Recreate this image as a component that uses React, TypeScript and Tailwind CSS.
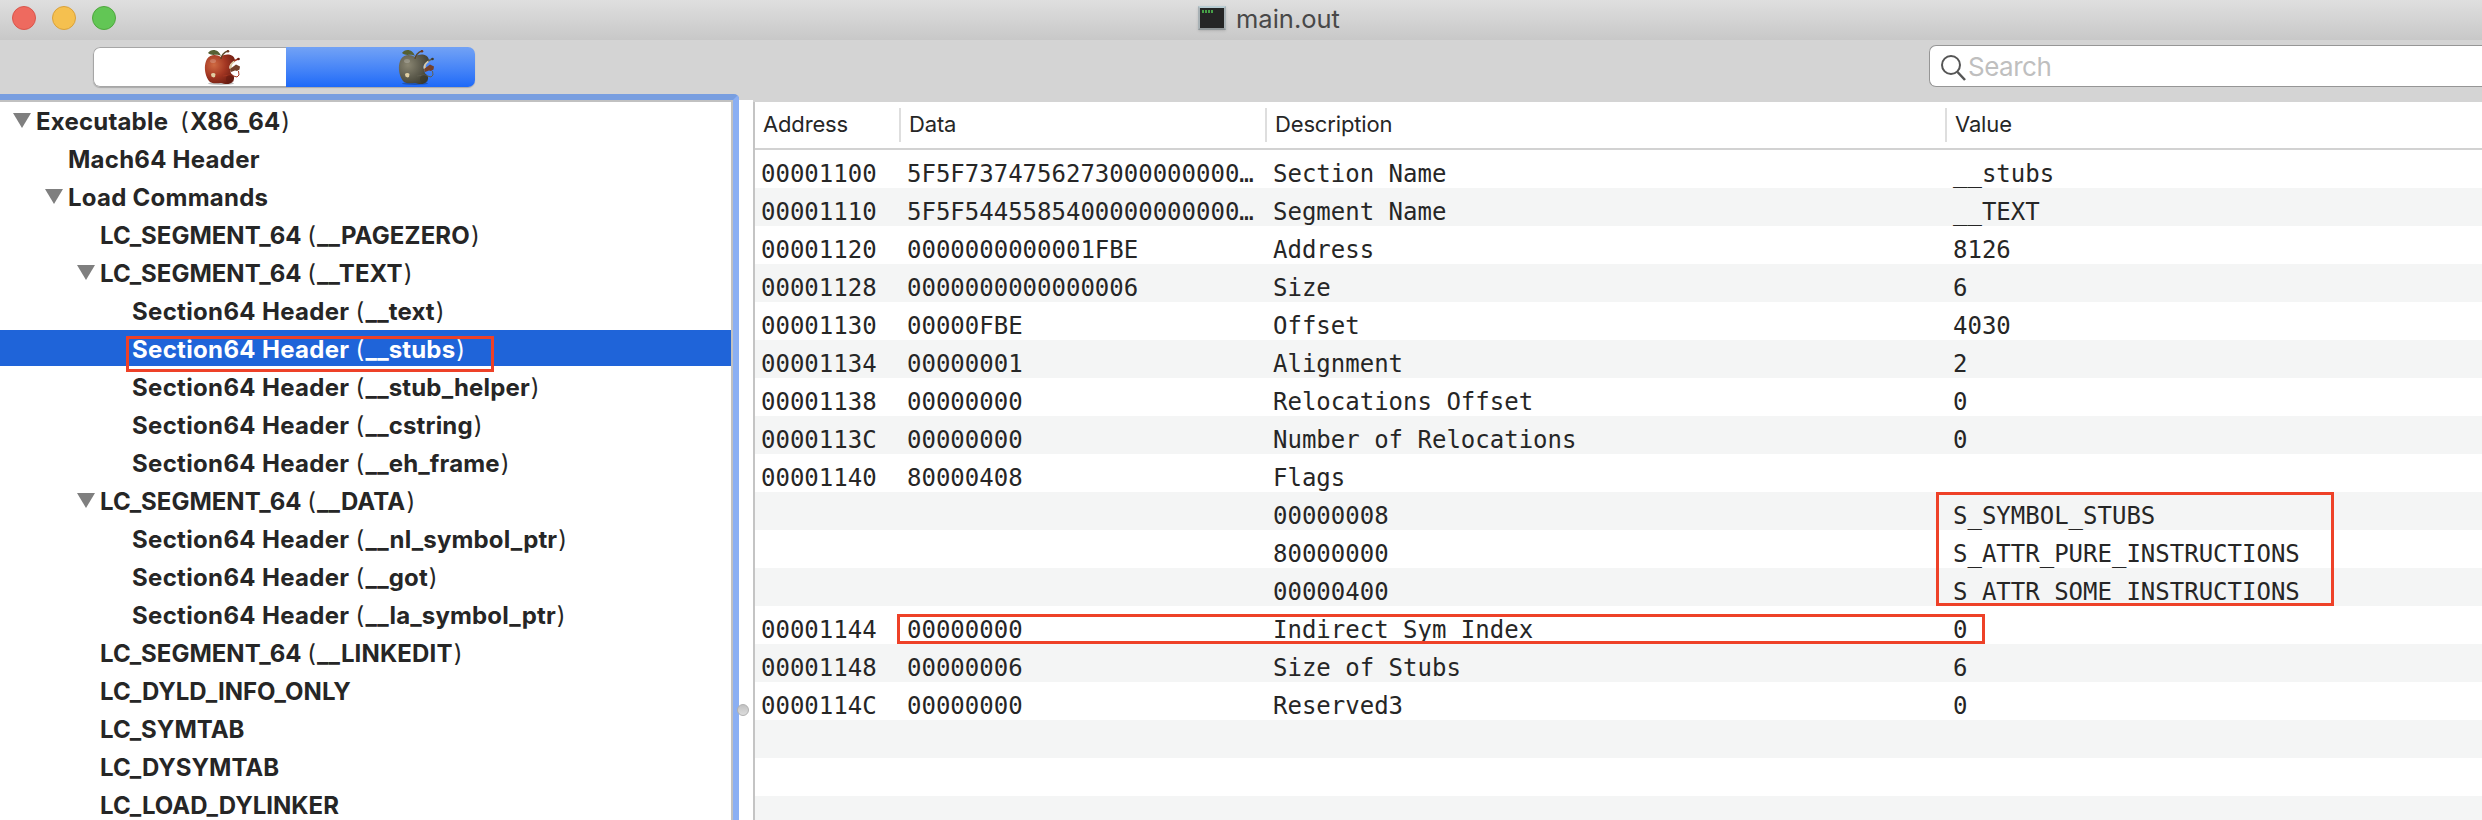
import React from "react";

type Node = { depth: number; name: string; arg?: string; open?: boolean; selected?: boolean };

const nodes: Node[] = [
  { depth: 0, name: "Executable\u00a0", arg: "X86_64", open: true },
  { depth: 1, name: "Mach64 Header" },
  { depth: 1, name: "Load Commands", open: true },
  { depth: 2, name: "LC_SEGMENT_64", arg: "__PAGEZERO" },
  { depth: 2, name: "LC_SEGMENT_64", arg: "__TEXT", open: true },
  { depth: 3, name: "Section64 Header", arg: "__text" },
  { depth: 3, name: "Section64 Header", arg: "__stubs", selected: true },
  { depth: 3, name: "Section64 Header", arg: "__stub_helper" },
  { depth: 3, name: "Section64 Header", arg: "__cstring" },
  { depth: 3, name: "Section64 Header", arg: "__eh_frame" },
  { depth: 2, name: "LC_SEGMENT_64", arg: "__DATA", open: true },
  { depth: 3, name: "Section64 Header", arg: "__nl_symbol_ptr" },
  { depth: 3, name: "Section64 Header", arg: "__got" },
  { depth: 3, name: "Section64 Header", arg: "__la_symbol_ptr" },
  { depth: 2, name: "LC_SEGMENT_64", arg: "__LINKEDIT" },
  { depth: 2, name: "LC_DYLD_INFO_ONLY" },
  { depth: 2, name: "LC_SYMTAB" },
  { depth: 2, name: "LC_DYSYMTAB" },
  { depth: 2, name: "LC_LOAD_DYLINKER" },
];

const indents = ["pl-[13px]", "pl-[45px]", "pl-[77px]", "pl-[109px]"];
const tracking = ["tracking-[0.2px]", "tracking-[0.25px]", "tracking-normal", "tracking-[0.33px]"];

const rows: string[][] = [
  ["00001100", "5F5F7374756273000000000…", "Section Name", "__stubs"],
  ["00001110", "5F5F5445585400000000000…", "Segment Name", "__TEXT"],
  ["00001120", "0000000000001FBE", "Address", "8126"],
  ["00001128", "0000000000000006", "Size", "6"],
  ["00001130", "00000FBE", "Offset", "4030"],
  ["00001134", "00000001", "Alignment", "2"],
  ["00001138", "00000000", "Relocations Offset", "0"],
  ["0000113C", "00000000", "Number of Relocations", "0"],
  ["00001140", "80000408", "Flags", ""],
  ["", "", "00000008", "S_SYMBOL_STUBS"],
  ["", "", "80000000", "S_ATTR_PURE_INSTRUCTIONS"],
  ["", "", "00000400", "S_ATTR_SOME_INSTRUCTIONS"],
  ["00001144", "00000000", "Indirect Sym Index", "0"],
  ["00001148", "00000006", "Size of Stubs", "6"],
  ["0000114C", "00000000", "Reserved3", "0"],
  ["", "", "", ""],
  ["", "", "", ""],
  ["", "", "", ""],
];

function Apple({ id, light, mid, dark }: { id: string; light: string; mid: string; dark: string }) {
  return (
    <svg width="38" height="36" viewBox="0 0 38 36" className="shrink-0">
      <defs>
        <radialGradient id={id} cx="0.3" cy="0.35" r="0.8">
          <stop offset="0" stopColor={light} />
          <stop offset="0.5" stopColor={mid} />
          <stop offset="1" stopColor={dark} />
        </radialGradient>
      </defs>
      <ellipse cx="17" cy="34.5" rx="13" ry="1.4" fill="#000" opacity="0.25" />
      <path
        d="M17 8C13 5 6 5 3 10C-1 17 1 28 6 33C9 35 14 34 17 34C20 35 26 36 28 33C30 31 31 28 29 26C27 25 26 23 27 21C24 19 25 15 31 11C30 5 21 4 17 8Z"
        fill={`url(#${id})`}
      />
      <path d="M31 11C26 14 24 18 27 22L28.500 20C27 18 27.500 15 31 13Z" fill="#dcc9a0" />
      <path d="M26 20L30 17L32 15.500L36 17.500L35.500 20.500L33 22L31 21.500L27 23Z" fill="#74412b" />
      <path d="M19 27L26 26L33 28L35 26L34.500 22" fill="none" stroke={mid} strokeWidth="1" />
      <circle cx="26" cy="30" r="4" fill={dark} opacity="0.6" />
      <path d="M30 12L34 10" stroke={mid} strokeWidth="1.4" />
      <circle cx="34.5" cy="10" r="1.3" fill={dark} />
      <path d="M17 10C17 7 20 3 24 2" fill="none" stroke="#5b4526" strokeWidth="1.3" />
      <circle cx="24" cy="2.2" r="1.3" fill="#6d3820" />
      <path d="M4 4C7 -1 15 0 17 7C12 4 9 8 4 4Z" fill="#566034" />
      <path d="M7 25C8 23.500 10.500 23.500 11.500 25L11 28L9.500 28.500L7.500 27.500Z" fill="#e0cfa4" />
      <ellipse cx="9" cy="12" rx="3" ry="2" fill="#fff" opacity="0.2" />
    </svg>
  );
}

function TitleBar() {
  return (
    <header className="flex h-10 shrink-0 items-start bg-linear-to-b from-[#dfdfdf] to-[#c8c8c8]">
      <div className="flex gap-4 pt-1.5 pl-3">
        <span className="size-6 rounded-full border border-[#d9564c] bg-[#ee6a5f]" />
        <span className="size-6 rounded-full border border-[#d9a13b] bg-[#f5c04f]" />
        <span className="size-6 rounded-full border border-[#4fa73e] bg-[#62c655]" />
      </div>
      <div className="ml-[1082px] flex h-10 items-start">
        <div className="mt-1.5 h-6 w-7 border-2 border-t-[#b9cdd4] border-r-[#a8b1b5] border-b-[#8f9496] border-l-[#a8b1b5] bg-[#252525] shadow">
          <div className="flex gap-px pt-0.5 pl-0.5">
            <i className="h-[3px] w-0.5 bg-[#47a047]" />
            <i className="h-[3px] w-0.5 bg-[#47a047]" />
            <i className="h-[3px] w-0.5 bg-[#47a047]" />
            <i className="h-[3px] w-0.5 bg-[#47a047]" />
          </div>
        </div>
        <span className="ml-2.5 text-[25.5px] leading-[38px] text-[#484848]">main.out</span>
      </div>
    </header>
  );
}

function Toolbar() {
  return (
    <div className="flex h-[54px] shrink-0 items-start bg-[#d4d4d4] pt-[7px]">
      <div className="ml-[93px] flex h-10 w-[382px] overflow-hidden rounded-[7px] shadow-[0_1px_1px_rgba(0,0,0,0.2)]">
        <div className="w-[193px] rounded-l-[7px] border border-r-0 border-[#a6a6a6] bg-white pt-px pl-[110px]">
          <Apple id="apple-red" light="#cf6a42" mid="#a33622" dark="#651a10" />
        </div>
        <div className="w-[189px] bg-linear-to-b from-[#72a2f5] to-[#1d69f8] pt-0.5 pl-[112px]">
          <Apple id="apple-gray" light="#8a8672" mid="#615f50" dark="#3b3a2e" />
        </div>
      </div>
      <div className="ml-[1454px] -mt-0.5 flex h-[42px] w-[553px] shrink-0 items-start rounded-l-[7px] border border-r-0 border-[#969696] bg-white">
        <svg width="28" height="32" viewBox="0 0 28 32" className="mt-[9px] ml-2.5 shrink-0" fill="none" stroke="#555" strokeWidth="2">
          <circle cx="11" cy="10" r="9" />
          <path d="M17.500 17L25 25" strokeWidth="2.500" />
        </svg>
        <span className="text-[26px] leading-[41px] tracking-[-0.5px] text-[#bfbfbf]">Search</span>
      </div>
    </div>
  );
}

function TreeRow({ node }: { node: Node }) {
  return (
    <div
      className={`mb-0.5 flex h-9 shrink-0 items-start whitespace-pre ${indents[node.depth]} ${
        node.selected ? "bg-[#1f64d9] text-white" : "text-[#262626]"
      }`}
    >
      <svg width="18" height="16" viewBox="0 0 18 16" className="mt-[11px] mr-[5px] shrink-0">
        {node.open && <path d="M0 0H18L9 15Z" fill="#7f7f7f" />}
      </svg>
      <span className={`text-[24px] leading-10 font-bold ${tracking[node.depth]}`}>
        {node.name}
        {node.arg && (
          <>
            {" "}
            <span className="mr-px font-normal">(</span>
            <span className="tracking-[0.15px]">{node.arg}</span>
            <span className="ml-px font-normal">)</span>
          </>
        )}
      </span>
    </div>
  );
}

function HeaderCell({ label, width, first }: { label: string; width: string; first?: boolean }) {
  return (
    <div className={`flex shrink-0 items-start pt-1.5 ${width}`}>
      {!first && <span className="h-[34px] w-0.5 bg-[#dedede]" />}
      <span className="pl-2 text-[22px] leading-[33px] tracking-[-0.15px] text-[#262626]">{label}</span>
    </div>
  );
}

export default function App() {
  return (
    <div className="relative flex h-[820px] w-[2482px] flex-col overflow-hidden bg-white font-['Inter',sans-serif]">
      <TitleBar />
      <Toolbar />
      <div className="flex min-h-0 flex-1 bg-[#d4d4d4]">
        <aside className="flex w-[739px] shrink-0 flex-col overflow-hidden rounded-tr-[5px] border-t-[6px] border-r-[6px] border-t-[#789ee0] border-r-[#8baff3] bg-white">
          <div className="flex flex-1 flex-col overflow-hidden border-t-2 border-r-2 border-[#c1c1c1]">
            {nodes.map((n, i) => (
              <TreeRow key={i} node={n} />
            ))}
          </div>
        </aside>
        <div className="mt-1.5 w-3.5 shrink-0 bg-white pt-[604px]">
          <div className="-ml-0.5 size-3 rounded-full border border-[#b0b0b0] bg-linear-to-b from-[#c2c2c2] to-[#dcdcdc]" />
        </div>
        <main className="mt-2 flex min-w-0 flex-1 flex-col overflow-hidden border-l-2 border-[#c4c4c4] bg-white">
          <div className="flex h-12 shrink-0 border-b-2 border-[#d2d2d2]">
            <HeaderCell label="Address" width="w-36" first />
            <HeaderCell label="Data" width="w-[366px]" />
            <HeaderCell label="Description" width="w-[680px]" />
            <HeaderCell label="Value" width="w-[500px]" />
          </div>
          {rows.map((r, i) => (
            <div
              key={i}
              className={`flex h-[38px] shrink-0 pl-1.5 font-['DejaVu_Sans_Mono',monospace] text-[24px] leading-[48px] whitespace-pre text-[#262626] ${
                i % 2 ? "bg-[#f4f5f5]" : "bg-white"
              }`}
            >
              <span className="w-[146px] shrink-0">{r[0]}</span>
              <span className="w-[366px] shrink-0">{r[1]}</span>
              <span className="w-[680px] shrink-0">{r[2]}</span>
              <span>{r[3]}</span>
            </div>
          ))}
        </main>
      </div>
      <div className="absolute top-[336px] left-[126px] h-9 w-[368px] border-[3px] border-[#ee4128]" />
      <div className="absolute top-[492px] left-[1936px] h-[114px] w-[398px] border-[3px] border-[#ee4128]" />
      <div className="absolute top-[614px] left-[897px] h-[30px] w-[1088px] border-[3px] border-[#ee4128]" />
    </div>
  );
}
